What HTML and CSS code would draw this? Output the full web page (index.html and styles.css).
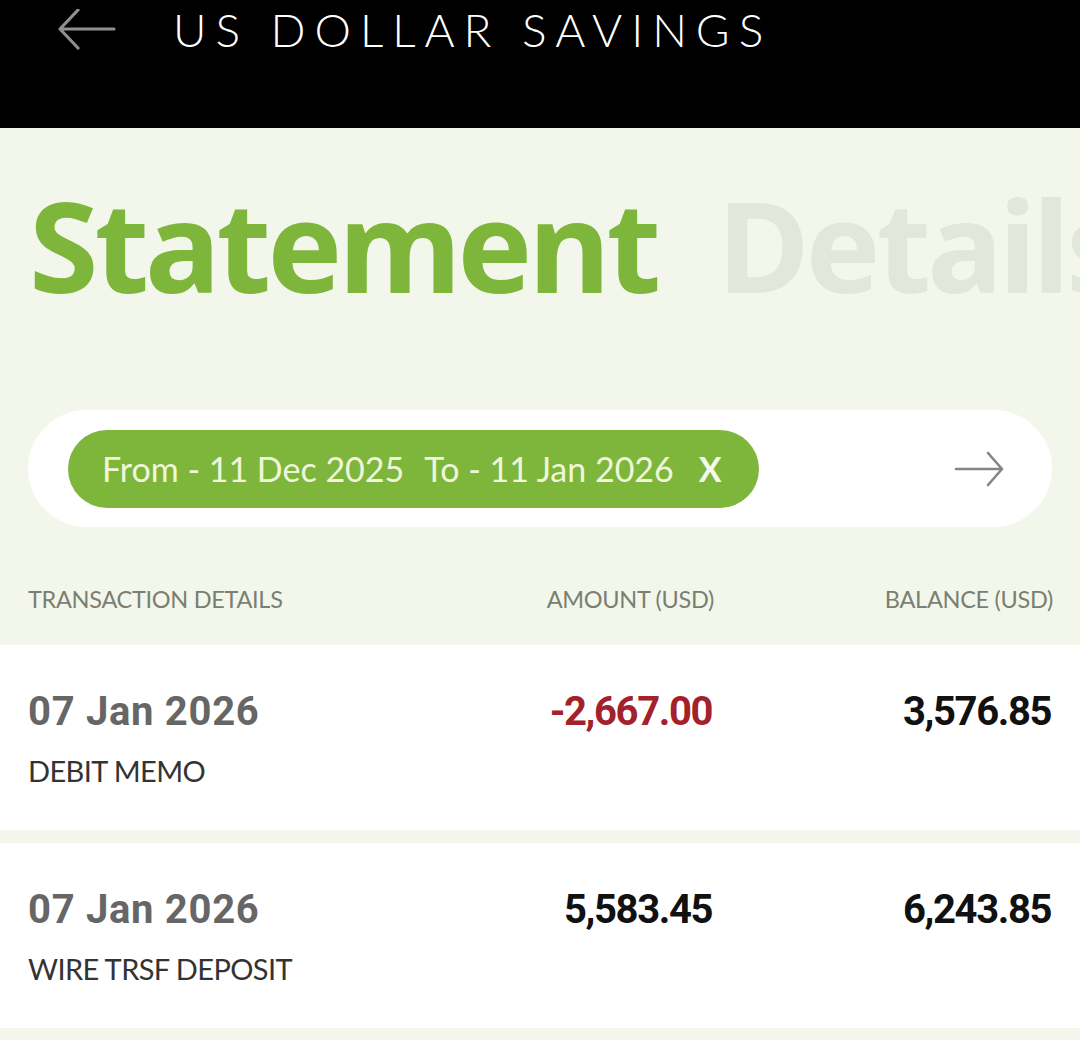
FILE: index.html
```html
<!DOCTYPE html>
<html lang="en">
<head>
<meta charset="utf-8">
<title>US Dollar Savings</title>
<link rel="stylesheet" href="styles.css">
</head>
<body>
<header class="topbar">
  <svg class="back" width="60" height="44" viewBox="0 0 60 44" aria-hidden="true">
    <path d="M57 20 H4 M21 1 L3 20 L21 39" fill="none" stroke="#8f8f8f" stroke-width="3.2" stroke-linecap="round" stroke-linejoin="round"/>
  </svg>
  <h1 class="title">US DOLLAR SAVINGS</h1>
</header>
<main class="page">
  <div class="hero">
    <span class="hero-active">Statement</span>
    <span class="hero-inactive">Details</span>
  </div>
  <div class="filter">
    <div class="chip">
      <span>From - 11 Dec 2025</span>
      <span>To - 11 Jan 2026</span>
      <span class="chip-x">X</span>
    </div>
    <svg class="go" width="52" height="36" viewBox="0 0 52 36" aria-hidden="true">
      <path d="M2 18 H48 M34 2 L48 18 L34 34" fill="none" stroke="#858585" stroke-width="2.6" stroke-linecap="round" stroke-linejoin="round"/>
    </svg>
  </div>
  <div class="cols">
    <span class="col-a">TRANSACTION DETAILS</span>
    <span class="col-b">AMOUNT (USD)</span>
    <span class="col-c">BALANCE (USD)</span>
  </div>
  <div class="rows">
    <div class="row">
      <div class="cell-a">
        <div class="date">07 Jan 2026</div>
        <div class="desc">DEBIT MEMO</div>
      </div>
      <div class="amount neg">-2,667.00</div>
      <div class="balance">3,576.85</div>
    </div>
    <div class="row">
      <div class="cell-a">
        <div class="date">07 Jan 2026</div>
        <div class="desc">WIRE TRSF DEPOSIT</div>
      </div>
      <div class="amount">5,583.45</div>
      <div class="balance">6,243.85</div>
    </div>
  </div>
</main>
</body>
</html>
```
FILE: styles.css
```css
html, body {
  margin: 0;
  padding: 0;
}
body {
  width: 1080px;
  height: 1040px;
  overflow: hidden;
  background: #f3f7eb;
  font-family: "Lato", "Noto Sans", sans-serif;
}
.topbar {
  height: 128px;
  background: #000;
  display: flex;
  align-items: flex-start;
  box-sizing: border-box;
  padding: 9px 0 0 57px;
}
.back {
  display: block;
}
.title {
  margin: -2px 0 0 56px;
  color: #fff;
  font-family: "Lato", sans-serif;
  font-weight: 300;
  font-size: 46px;
  line-height: 46px;
  letter-spacing: 9px;
  white-space: nowrap;
}
.page {
  display: flex;
  flex-direction: column;
}
.hero {
  display: flex;
  gap: 60px;
  white-space: nowrap;
  overflow: hidden;
  padding: 53px 0 0 29px;
  height: 230px;
  box-sizing: border-box;
  font-family: "Noto Sans", sans-serif;
  font-weight: 700;
  font-size: 126px;
  line-height: 126px;
  letter-spacing: -4px;
}
.hero-active { color: #7db63a; }
.hero-inactive { color: #e2e7dc; }
.filter {
  margin: 52px 28px 0;
  height: 117px;
  background: #fff;
  border-radius: 59px;
  display: flex;
  align-items: center;
  justify-content: space-between;
  padding: 0 46px 0 40px;
  box-sizing: border-box;
}
.chip {
  height: 78px;
  background: #7db63a;
  border-radius: 39px;
  display: flex;
  align-items: center;
  gap: 20px;
  padding: 0 37px 0 34px;
  color: #eff6dc;
  font-family: "Lato", sans-serif;
  font-size: 34px;
  white-space: nowrap;
}
.chip-x {
  font-weight: 700;
  color: #f6f9ee;
  margin-left: 5px;
}
.go { display: block; }
.cols {
  display: grid;
  grid-template-columns: 1fr 300px 339px;
  padding: 26px 27px 0 28px;
  height: 118px;
  align-items: center;
  color: #7a7f72;
  font-family: "Lato", sans-serif;
  font-size: 23.5px;
  letter-spacing: -0.3px;
  box-sizing: border-box;
}
.col-b, .col-c { text-align: right; }
.rows {
  display: flex;
  flex-direction: column;
  gap: 13px;
}
.row {
  background: #fff;
  height: 185px;
  display: grid;
  grid-template-columns: 1fr 300px 339px;
  padding: 42px 29px 0 28px;
  box-sizing: border-box;
  align-items: start;
}
.date, .amount, .balance {
  font-family: "Roboto", sans-serif;
  font-weight: 700;
  font-size: 40px;
  line-height: 50px;
}
.date {
  color: #666;
  letter-spacing: 0.7px;
}
.amount, .balance {
  text-align: right;
  color: #111;
  letter-spacing: -1.4px;
}
.amount.neg { color: #a3212b; }
.desc {
  margin-top: 16px;
  color: #333;
  font-family: "Lato", sans-serif;
  font-size: 29px;
  line-height: 36px;
  letter-spacing: -0.6px;
}
```
